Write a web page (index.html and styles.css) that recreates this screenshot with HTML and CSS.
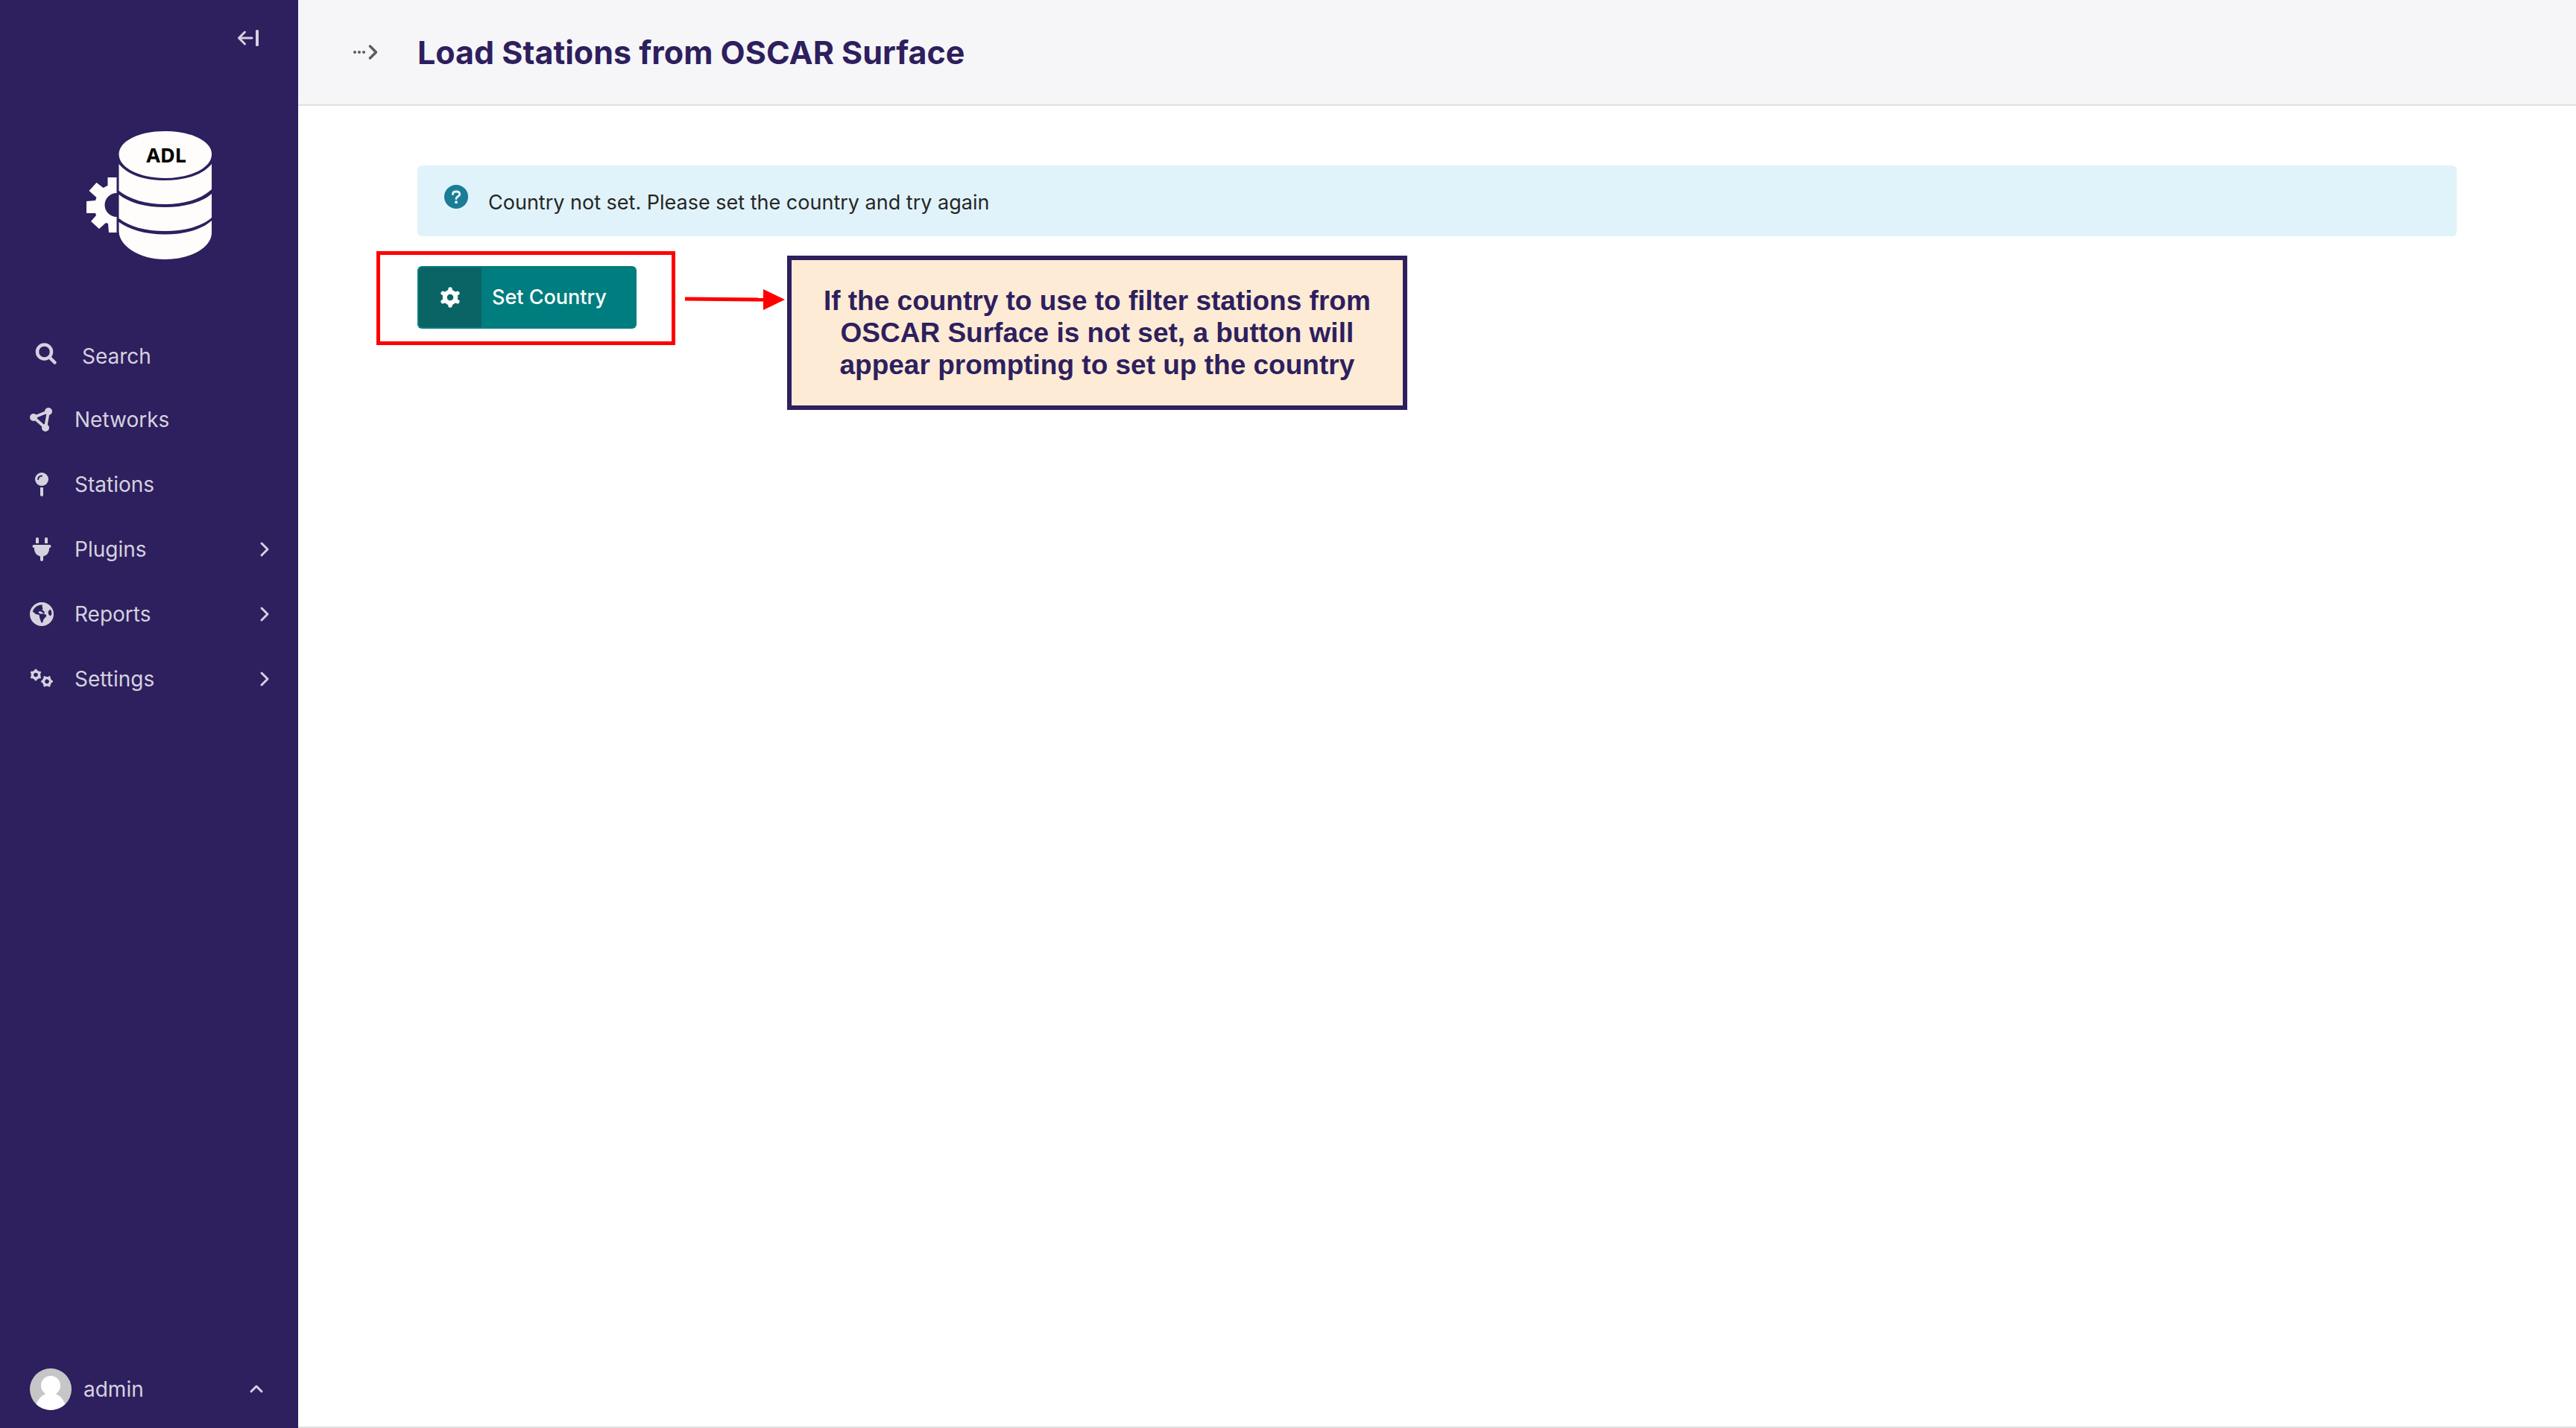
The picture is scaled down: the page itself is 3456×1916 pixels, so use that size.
FILE: index.html
```html
<!DOCTYPE html>
<html lang="en">
<head>
<meta charset="utf-8">
<title>Load Stations from OSCAR Surface</title>
<link rel="stylesheet" href="styles.css">
</head>
<body>
<div class="layout">
  <aside class="sidebar">
    <div class="sidebar-top">
      <button class="icon-button" type="button" aria-label="Collapse menu">
        <svg class="collapse-icon" viewBox="0 0 32 32"><path d="M4.500 16H22M4.500 16l8-8M4.500 16l8 8" fill="none" stroke="currentColor" stroke-width="3" stroke-linecap="round" stroke-linejoin="round"/><rect x="27" y="5" width="4" height="22" rx="1.500" fill="currentColor"/></svg>
      </button>
    </div>
    <a class="logo" href="#" aria-label="ADL home">
      <svg class="logo-image" viewBox="0 0 168 172">
        <g fill="#fefdfb">
          <path d="M0 94l12-1 1.500-4-10-9 10-11 9 7 6-3V62h12v21a16 16 0 0 0 0 32v21H30l-1-12-3-1-9 8-11-10 7-8-1-3-12 0z"/>
          <path d="M43.500 31C43.500 13 71 0 105.500 0S168 13 168 31s-28 32-62.500 32S43.500 49 43.500 31z"/>
          <path d="M43.500 44c12 15 35 22 62 22s50-7 62.500-22v34c-14 13-36 20-62.500 20s-48-7-62-18z"/>
          <path d="M43.500 85c14 11 35 17 62 17s50-7 62.500-18v32c-14 12-36 18-62.500 18s-48-6-62-17z"/>
          <path d="M43.500 122c14 10 35 16.500 62 16.500s50-7 62.500-18.500v16c0 20-28 36-62.500 36s-62-18-62-38z"/>
        </g>
        <text class="logo-text" x="107" y="42" text-anchor="middle">ADL</text>
      </svg>
    </a>
    <nav class="menu" aria-label="Main">
      <a class="menu-item menu-search" href="#">
        <svg class="menu-icon" viewBox="0 0 32 32"><circle cx="13.500" cy="13" r="9.500" fill="none" stroke="currentColor" stroke-width="4.500"/><path d="M20.500 20.500l7 7" stroke="currentColor" stroke-width="4.500" stroke-linecap="round"/></svg>
        <span class="menu-label">Search</span>
      </a>
      <a class="menu-item" href="#">
        <svg class="menu-icon" viewBox="0 0 32 32"><path d="M5 13l20-8-4 22z" fill="none" stroke="currentColor" stroke-width="4"/><g fill="currentColor"><circle cx="5" cy="13" r="5"/><circle cx="25" cy="5" r="5"/><circle cx="21" cy="27" r="5"/></g></svg>
        <span class="menu-label">Networks</span>
      </a>
      <a class="menu-item" href="#">
        <svg class="menu-icon" viewBox="0 0 32 32"><circle cx="16" cy="9" r="9" fill="currentColor"/><path d="M16 22v8" stroke="currentColor" stroke-width="4" stroke-linecap="round"/><path d="M14 20h4v4h-4z" fill="currentColor"/><path class="pin-shine" d="M11 9a5.500 5.500 0 0 1 5-4.500"/></svg>
        <span class="menu-label">Stations</span>
      </a>
      <a class="menu-item" href="#">
        <svg class="menu-icon" viewBox="0 0 32 32" fill="currentColor"><path d="M8 8V2a2 2 0 0 1 4 0v6zM20 8V2a2 2 0 0 1 4 0v6zM5.500 10h21a1.500 1.500 0 0 1 0 4H26v2a10 10 0 0 1-8 9.500V30a2 2 0 0 1-4 0v-4.500A10 10 0 0 1 6 16v-2h-.5a1.500 1.500 0 0 1 0-4z"/></svg>
        <span class="menu-label">Plugins</span>
        <svg class="chevron" viewBox="0 0 16 24"><path d="M4 4l8 8-8 8"/></svg>
      </a>
      <a class="menu-item" href="#">
        <svg class="menu-icon" viewBox="0 0 32 32"><path fill="currentColor" fill-rule="evenodd" d="M16 0a16 16 0 1 1 0 32 16 16 0 0 1 0-32zM17 3.500C11 3 5.500 7 3.800 12.500l4.200 3.500 4.500 1 1 5 2 5.500h1.500l1.500-4.500 3.500-4V17l-3-1.500h-5.500l-2-2 1.500-1.500 3 1 2.500 2h1.500l-1-3-2.500-1.500 1-2-1-3zM26.500 10l-2 3 1 4 2.500 1.500 1.500-3-1-5z"/></svg>
        <span class="menu-label">Reports</span>
        <svg class="chevron" viewBox="0 0 16 24"><path d="M4 4l8 8-8 8"/></svg>
      </a>
      <a class="menu-item" href="#">
        <svg class="menu-icon" viewBox="0 0 32 32">
          <g id="small-gear" fill="none" stroke="currentColor" stroke-linecap="round">
            <circle cx="8" cy="10.500" r="4.600" stroke-width="3.600"/>
            <path stroke-width="3" d="M8 5V4M8 16v1M3.200 7.700l-.8-.5M12.800 13.300l.8.500M3.200 13.300l-.8.500M12.800 7.700l.8-.5"/>
          </g>
          <use href="#small-gear" transform="translate(15 8.800) rotate(30 8 10.500)"/>
        </svg>
        <span class="menu-label">Settings</span>
        <svg class="chevron" viewBox="0 0 16 24"><path d="M4 4l8 8-8 8"/></svg>
      </a>
    </nav>
    <button class="account" type="button">
      <svg class="avatar" viewBox="0 0 56 56"><clipPath id="avatar-clip"><circle cx="28" cy="28" r="28"/></clipPath><g clip-path="url(#avatar-clip)"><path d="M0 0h56v56H0z" fill="#c6c6c6"/><circle cx="28" cy="23" r="13" fill="#fff"/><path d="M8 50c2-8 8-14 14-16h12c6 2 12 8 14 16v8H8z" fill="#fff"/></g></svg>
      <span class="account-name">admin</span>
      <svg class="account-chevron" viewBox="0 0 24 16"><path d="M5 11l7-7 7 7"/></svg>
    </button>
  </aside>
  <div class="page">
    <header class="header">
      <button class="icon-button breadcrumb-toggle" type="button" aria-label="Show breadcrumbs">
        <svg class="breadcrumb-icon" viewBox="0 0 32 32"><g fill="currentColor"><circle cx="2" cy="16" r="2"/><circle cx="8" cy="16" r="2"/><circle cx="14" cy="16" r="2"/></g><path d="M22.500 8l8 8-8 8" fill="none" stroke="currentColor" stroke-width="3.500" stroke-linecap="round" stroke-linejoin="round"/></svg>
      </button>
      <h1 class="title">Load Stations from OSCAR Surface</h1>
    </header>
    <main class="content">
      <div class="help" role="status">
        <svg class="help-icon" viewBox="0 0 32 32"><circle cx="16" cy="16" r="16" fill="#1b7c96"/><path d="M11.500 12.500c0-2.300 2-3.500 4.500-3.500s4.700 1.200 4.700 3.700c0 2.800-4.700 2.800-4.700 5.800" fill="none" stroke="#e1f3fa" stroke-width="3" stroke-linecap="round"/><circle cx="16" cy="23.300" r="2" fill="#e1f3fa"/></svg>
        <p class="help-text">Country not set. Please set the country and try again</p>
      </div>
      <div class="guide">
        <div class="guide-frame">
          <button class="button" type="button">
            <span class="button-icon-box">
              <svg class="button-icon" viewBox="0 0 28 28"><g fill="none" stroke="#fff"><circle cx="14" cy="14" r="7.300" stroke-width="6"/><path stroke-width="5.500" stroke-linecap="round" stroke-linejoin="round" d="M14 4.500V3M14 23.500V25M5.800 9.200l-1.600-.9M22.200 18.800l1.600.9M5.800 18.800l-1.600.9M22.200 9.200l1.600-.9"/></g></svg>
            </span>
            <span class="button-label">Set Country</span>
          </button>
        </div>
        <svg class="guide-arrow" viewBox="0 0 134 28" aria-hidden="true"><path d="M0 10.500l107 1v5l-107-1z" fill="#f00"/><path d="M105 0l29 14-29 14z" fill="#f00"/></svg>
        <p class="guide-note">If the country to use to filter stations from OSCAR Surface is not set, a button will appear prompting to set up the country</p>
      </div>
    </main>
  </div>
</div>
</body>
</html>
```
FILE: styles.css
```css
* {
  box-sizing: border-box;
}

body {
  margin: 0;
  font-family: Inter, "Liberation Sans", sans-serif;
  font-size: 28px;
  line-height: 36px;
  color: #262626;
  background: #fff;
}

button {
  padding: 0;
  border: 0;
  font: inherit;
  color: inherit;
  background: none;
  cursor: pointer;
}

svg {
  display: block;
  flex: none;
}

.layout {
  display: flex;
  min-height: 100vh;
}

/* Sidebar */
.sidebar {
  display: flex;
  flex: none;
  flex-direction: column;
  width: 400px;
  color: #d5d2df;
  background: #2e1f5e;
}

.sidebar-top {
  display: flex;
  justify-content: flex-end;
  padding: 35px 52px 0 0;
}

.collapse-icon {
  width: 32px;
  height: 32px;
}

.logo {
  align-self: center;
  margin: 109px 0 88px;
}

.logo-image {
  width: 168px;
  height: 172px;
}

.logo-text {
  font-family: "Noto Sans", sans-serif;
  font-size: 27px;
  font-weight: 700;
}

.menu {
  display: flex;
  flex-direction: column;
}

.menu-item {
  display: flex;
  align-items: center;
  gap: 28px;
  height: 87px;
  padding: 0 37px 0 40px;
  color: inherit;
  text-decoration: none;
}

.menu-search {
  gap: 32px;
  height: 83px;
  padding-left: 46px;
}

.menu-icon {
  width: 32px;
  height: 32px;
}

.menu-search .menu-icon {
  margin-bottom: 6px;
}

.menu-label {
  flex: 1;
}

.pin-shine {
  fill: none;
  stroke: #2e1f5e;
  stroke-width: 2;
  stroke-linecap: round;
}

.chevron {
  width: 16px;
  height: 24px;
}

.account-chevron {
  width: 24px;
  height: 16px;
}

.chevron path,
.account-chevron path {
  fill: none;
  stroke: currentColor;
  stroke-width: 3;
  stroke-linecap: round;
  stroke-linejoin: round;
}

.account {
  display: flex;
  align-items: center;
  gap: 16px;
  margin-top: auto;
  padding: 24px 44px 24px 40px;
  text-align: left;
}

.avatar {
  width: 56px;
  height: 56px;
}

.account-name {
  flex: 1;
}

/* Page */
.page {
  display: flex;
  flex: 1;
  flex-direction: column;
  min-width: 0;
  border-bottom: 2px solid #e0e0e0;
}

.header {
  display: flex;
  align-items: center;
  gap: 54px;
  padding: 42px 74px;
  border-bottom: 2px solid #e0e0e0;
  background: #f6f6f8;
}

.breadcrumb-toggle {
  color: #5c5c5c;
}

.breadcrumb-icon {
  width: 32px;
  height: 32px;
}

.title {
  margin: 0;
  font-size: 43px;
  font-weight: 700;
  line-height: 56px;
  color: #2e1f5e;
}

.content {
  padding: 80px 160px;
}

.help {
  display: flex;
  align-items: flex-start;
  gap: 27px;
  padding: 26px 36px;
  border-radius: 6px;
  background: #e1f3fa;
}

.help-icon {
  width: 32px;
  height: 32px;
}

.help-text {
  margin: 5px 0 0;
  font-size: 27px;
  line-height: 38px;
}

/* Annotated action */
.guide {
  display: flex;
  align-items: flex-start;
  margin: 20px 0 0 -55px;
}

.guide-frame {
  padding: 15px 47px 17px 50px;
  border: 5px solid #f00;
}

.button {
  display: flex;
  align-items: center;
  padding: 2px;
  border-radius: 6px;
  font-size: 27px;
  font-weight: 500;
  color: #fff;
  background: #007d7e;
}

.button-icon-box {
  display: flex;
  align-items: center;
  justify-content: center;
  width: 84px;
  height: 80px;
  border-radius: 5px 0 0 5px;
  background: #0a6365;
}

.button-icon {
  width: 28px;
  height: 28px;
}

.button-label {
  padding: 0 38px 0 14px;
}

.guide-arrow {
  width: 134px;
  height: 28px;
  margin: 51px 3px 0 13px;
}

.guide-note {
  width: 832px;
  margin: 6px 0 0;
  padding: 33px 40px;
  border: 6px solid #2e1f5e;
  font-family: "Liberation Sans", sans-serif;
  font-size: 37px;
  font-weight: 700;
  line-height: 43px;
  text-align: center;
  color: #2e1f5e;
  background: #feebd5;
}
```
